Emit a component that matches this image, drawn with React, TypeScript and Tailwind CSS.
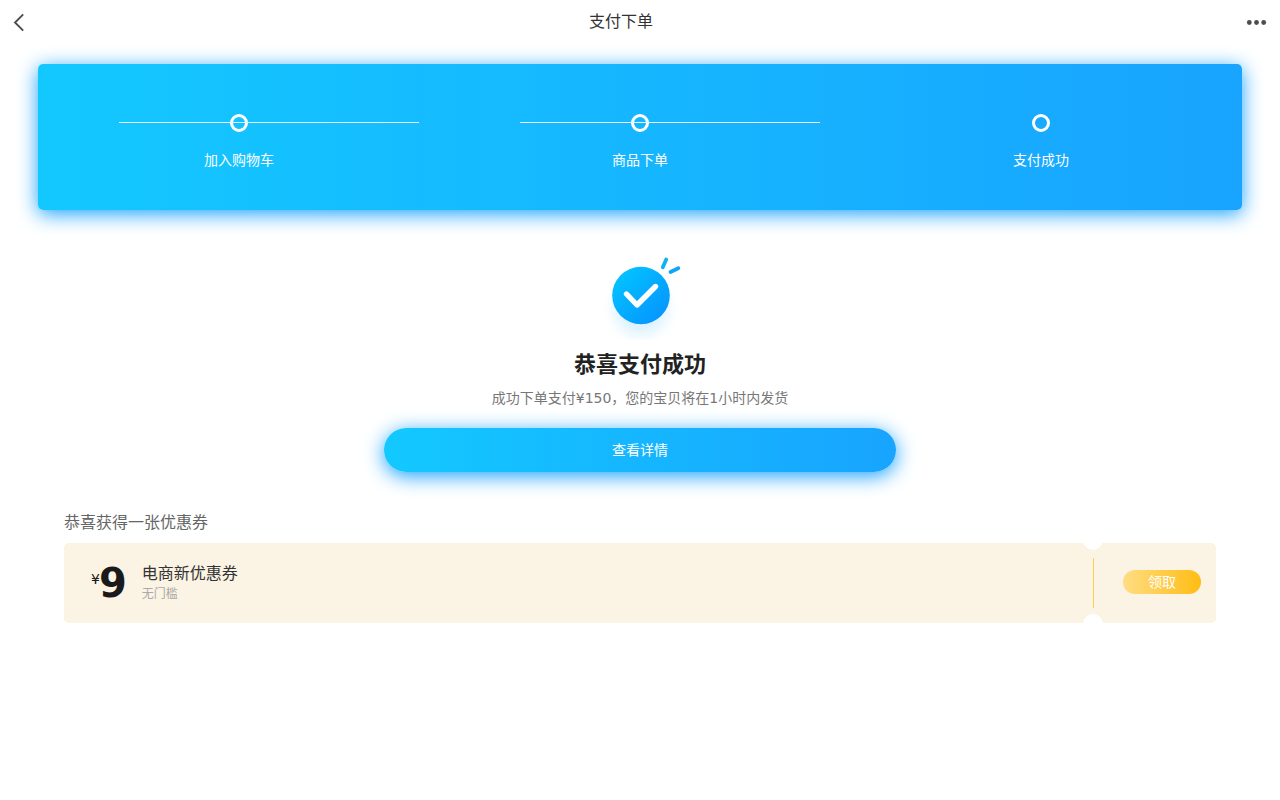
import React from "react";

const steps = [
  { label: "加入购物车", line: true },
  { label: "商品下单", line: true },
  { label: "支付成功", line: false },
];

function Header() {
  return (
    <header className="flex h-11 items-center justify-between">
      <button type="button" aria-label="返回" className="flex h-11 w-10 items-center pl-3">
        <svg width="14" height="20" viewBox="0 0 14 20" fill="none" stroke="#4d4d4d" strokeWidth="1.9">
          <path d="M11.2 2.300 L3 10.500 L11.2 18.700" />
        </svg>
      </button>
      <h1 className="text-base text-[#333]">支付下单</h1>
      <button type="button" aria-label="更多" className="flex h-11 w-[78px] items-center justify-end pr-3">
        <svg width="22" height="6" viewBox="0 0 22 6" fill="#4d4d4d">
          <circle cx="3.3" cy="3.5" r="2.4" />
          <circle cx="10.5" cy="3.5" r="2.4" />
          <circle cx="17.7" cy="3.5" r="2.4" />
        </svg>
      </button>
    </header>
  );
}

function Steps() {
  return (
    <ol className="mx-[3%] mt-5 grid grid-cols-3 rounded-[5px] bg-linear-to-r/srgb from-[#13c8ff] to-[#18a4ff] pt-[50px] pb-10 shadow-[0_4px_20px_#18a2ff]">
      {steps.map((step) => (
        <li key={step.label} className="relative flex flex-col items-center gap-[18px]">
          {step.line && <span className="absolute top-2 left-[20%] h-px w-3/4 bg-[#e8fbff]" />}
          <span className="size-[18px] rounded-full border-3 border-white" />
          <span className="text-sm text-white">{step.label}</span>
        </li>
      ))}
    </ol>
  );
}

function SuccessIcon() {
  return (
    <svg width="100" height="100" viewBox="0 0 100 100" fill="none" aria-hidden="true">
      <defs>
        <linearGradient id="disc" x1="0" y1="0" x2="1" y2="1">
          <stop offset="0.05" stopColor="#02c6ff" />
          <stop offset="0.95" stopColor="#0692ff" />
        </linearGradient>
        <filter id="soft" x="-50%" y="-50%" width="200%" height="200%">
          <feGaussianBlur stdDeviation="7" />
        </filter>
      </defs>
      <circle cx="51" cy="68" r="27" fill="#0aa5ff" opacity="0.15" filter="url(#soft)" />
      <circle cx="51" cy="55.500" r="28.8" fill="url(#disc)" />
      <path d="M36.500 54 L47 65 L65.500 46.500" stroke="#fff" strokeWidth="5.4" strokeLinecap="round" strokeLinejoin="round" />
      <path d="M72.800 27.300 L76.200 19.500" stroke="#10b2f6" strokeWidth="3.8" strokeLinecap="round" />
      <path d="M80.500 32 L88.300 28.200" stroke="#10a6f8" strokeWidth="3.8" strokeLinecap="round" />
    </svg>
  );
}

function Coupon() {
  return (
    <section className="mx-[5%] mt-10">
      <h3 className="text-base leading-[22px] text-[#666]">恭喜获得一张优惠券</h3>
      <div className="mt-[9px] flex h-20 items-center rounded-[5px] bg-[#fbf3e3]">
        <div className="flex flex-1 items-center pl-[27px]">
          <p className="flex items-start text-[#1a1a1a]">
            <span className="w-2 pt-[6px] text-sm leading-5">¥</span>
            <strong className="text-[40px] leading-10 font-bold">9</strong>
          </p>
          <div className="ml-[15px]">
            <h4 className="text-base leading-[22px] text-[#333]">电商新优惠券</h4>
            <p className="text-xs leading-[18px] text-[#aaa]">无门槛</p>
          </div>
        </div>
        <div className="relative flex h-20 w-5 items-center justify-center overflow-hidden">
          <span className="absolute -top-[13px] left-0 size-5 rounded-full bg-white" />
          <span className="h-[50px] w-px bg-[#ffd04d]" />
          <span className="absolute -bottom-[11px] left-0 size-5 rounded-full bg-white" />
        </div>
        <button
          type="button"
          className="mr-[15px] mb-[2px] ml-5 h-6 w-[78px] rounded-full bg-linear-to-r/srgb from-[#ffdd84] to-[#ffbd13] text-sm leading-6 text-white"
        >
          领取
        </button>
      </div>
    </section>
  );
}

export default function App() {
  return (
    <main className="bg-white font-['DejaVu_Sans','Noto_Sans_CJK_SC',sans-serif]">
      <Header />
      <Steps />
      <section className="mt-[30px] flex flex-col items-center">
        <SuccessIcon />
        <h2 className="mt-2 text-[22px] leading-[34px] font-bold text-[#222]">恭喜支付成功</h2>
        <p className="mt-[6px] text-sm leading-5 text-[#777]">成功下单支付¥150，您的宝贝将在1小时内发货</p>
        <button
          type="button"
          className="mt-5 h-11 w-2/5 rounded-full bg-linear-to-r/srgb from-[#13c8ff] to-[#18a4ff] text-sm text-white shadow-[0_4px_20px_#18a2ff]"
        >
          查看详情
        </button>
      </section>
      <Coupon />
    </main>
  );
}
